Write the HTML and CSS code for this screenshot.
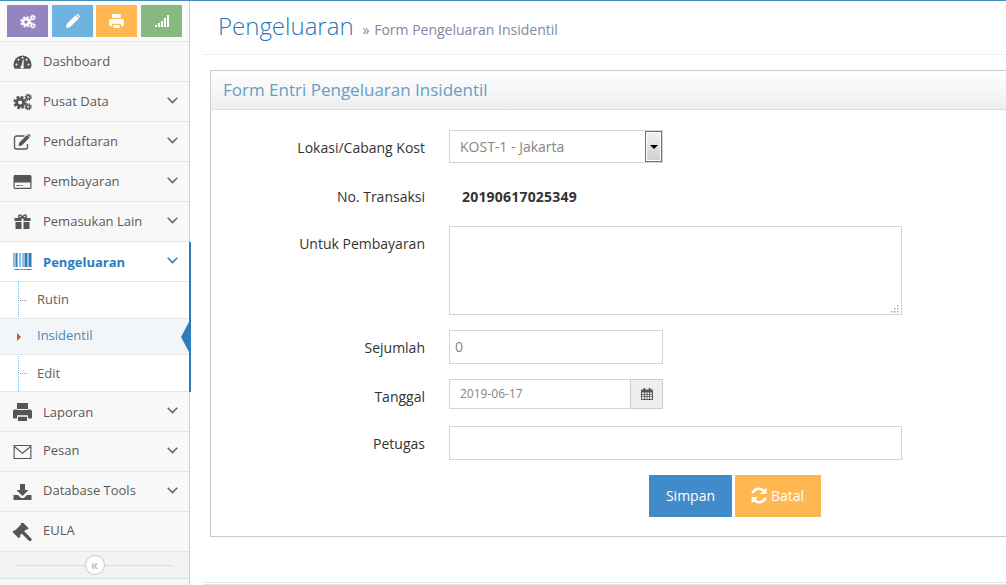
FILE: index.html
```html
<!DOCTYPE html>
<html lang="id">
<head>
<meta charset="utf-8">
<title>Form Pengeluaran Insidentil</title>
<link rel="stylesheet" href="styles.css">
</head>
<body>
<svg class="sprite" aria-hidden="true">
  <symbol id="i-cogs" viewBox="0 0 20 18">
    <circle cx="7.500" cy="9.500" r="3.700" fill="none" stroke="currentColor" stroke-width="3"/>
    <circle cx="7.500" cy="9.500" r="6" fill="none" stroke="currentColor" stroke-width="2.200" stroke-dasharray="2.900 1.810"/>
    <circle cx="16" cy="4" r="1.900" fill="none" stroke="currentColor" stroke-width="1.700"/>
    <circle cx="16" cy="4" r="3.200" fill="none" stroke="currentColor" stroke-width="1.200" stroke-dasharray="1.500 1"/>
    <circle cx="16" cy="14" r="1.900" fill="none" stroke="currentColor" stroke-width="1.700"/>
    <circle cx="16" cy="14" r="3.200" fill="none" stroke="currentColor" stroke-width="1.200" stroke-dasharray="1.500 1"/>
  </symbol>
  <symbol id="i-pencil" viewBox="0 0 14 14">
    <path fill="currentColor" d="M0 14l.8-4L9.600 1.200 12.800 4.400 4 13.200zM10.400.4c.5-.5 1.300-.5 1.800 0l1.400 1.400c.5.5.5 1.300 0 1.800l-.2.2L10.200.6z"/>
  </symbol>
  <symbol id="i-print" viewBox="0 0 19 18">
    <path fill="currentColor" d="M4 0h11v6H4zM2 6.500h15c1.100 0 2 .9 2 2v6c0 .5-.4 1-1 1h-3v-3H4v3H1c-.6 0-1-.5-1-1v-6c0-1.100.9-2 2-2zM5 13.500h9V18H5z"/>
    <path fill="none" stroke="#f8f8f8" stroke-width="1" d="M4 6.500h11M4 13h11"/>
  </symbol>
  <symbol id="i-print-w" viewBox="0 0 19 18">
    <path fill="currentColor" d="M4 0h11v5H4zM2 6.500h15c1.100 0 2 .9 2 2v6c0 .5-.4 1-1 1h-3v-3H4v3H1c-.6 0-1-.5-1-1v-6c0-1.100.9-2 2-2zM5.500 14h8v4h-8z"/>
  </symbol>
  <symbol id="i-chev" viewBox="0 0 11 7">
    <path fill="none" stroke="currentColor" stroke-width="1.500" d="M.7.800l4.800 4.800L10.300.800"/>
  </symbol>
</svg>

<div class="page">
  <aside class="sidebar">
    <div class="shortcuts">
      <a class="sc sc-purple"><svg class="sc-icon sc-cogs"><use href="#i-cogs"/></svg></a>
      <a class="sc sc-blue"><svg class="sc-icon sc-pen"><use href="#i-pencil"/></svg></a>
      <a class="sc sc-orange"><svg class="sc-icon sc-prn"><use href="#i-print-w"/></svg></a>
      <a class="sc sc-green">
        <svg class="sc-icon sc-sig" viewBox="0 0 14 12"><path fill="currentColor" d="M0 10h2v2H0zM3 8h2v4H3zM6 6h2v6H6zM9 3h2v9H9zM12 0h2v12h-2z"/></svg>
      </a>
    </div>
    <ul class="menu">
      <li class="item">
        <svg class="ic" viewBox="0 0 18 18"><path fill="currentColor" d="M0 11.500a9 9 0 0 1 18 0c0 1.600-.3 2.800-.8 3.800-.2.300-.5.500-.9.500H1.700c-.4 0-.7-.2-.9-.5C.3 14.300 0 13.100 0 11.500z"/><g fill="#f8f8f8"><circle cx="3" cy="11.500" r="1"/><circle cx="5" cy="6.800" r="1"/><circle cx="9" cy="4.800" r="1"/><circle cx="13" cy="6.800" r="1"/><circle cx="15" cy="11.500" r="1"/><path d="M8 12.500l1.500-6 .8.200L10 13a1.700 1.700 0 1 1-2-.5z"/></g></svg>
        <span class="lbl">Dashboard</span>
      </li>
      <li class="item">
        <svg class="ic"><use href="#i-cogs"/></svg><span class="lbl">Pusat Data</span><svg class="chev"><use href="#i-chev"/></svg>
      </li>
      <li class="item">
        <svg class="ic" viewBox="0 0 18 18"><path fill="none" stroke="currentColor" stroke-width="1.300" d="M11 3H3C1.900 3 1 3.900 1 5v9c0 1.100.9 2 2 2h9c1.100 0 2-.9 2-2v-3"/><path fill="currentColor" d="M5 13l.7-3.300L13.500 2l2.600 2.600-7.800 7.800zM14.300 1.200c.4-.4 1-.4 1.400 0l1.100 1.100c.4.400.4 1 0 1.400l-.2.200-2.500-2.500z"/></svg>
        <span class="lbl">Pendaftaran</span><svg class="chev"><use href="#i-chev"/></svg>
      </li>
      <li class="item">
        <svg class="ic" viewBox="0 0 18 18"><path fill="currentColor" fill-rule="evenodd" d="M1.500 2h15C17.300 2 18 2.700 18 3.500v11c0 .8-.7 1.500-1.500 1.500h-15C.7 16 0 15.300 0 14.500v-11C0 2.700.7 2 1.500 2zM1.200 9.500v5c0 .2.100.3.300.3h15c.2 0 .3-.1.300-.3v-5z"/><path fill="currentColor" d="M3 12h3v1H3zM7 12h2v1H7z"/></svg>
        <span class="lbl">Pembayaran</span><svg class="chev"><use href="#i-chev"/></svg>
      </li>
      <li class="item">
        <svg class="ic" viewBox="0 0 18 18"><path fill="currentColor" d="M1 5h7v3H1zM10 5h7v3h-7zM2 9h6v7H3c-.6 0-1-.4-1-1zM10 9h6v6c0 .6-.4 1-1 1h-5z"/><path fill="none" stroke="currentColor" stroke-width="1.400" d="M9 5C7 5 5 4.500 5 3.200 5 2 6.800 1.600 7.600 2.500 8.300 3.300 9 5 9 5zM9 5c2 0 4-.5 4-1.800C13 2 11.200 1.600 10.400 2.500 9.700 3.300 9 5 9 5z"/></svg>
        <span class="lbl">Pemasukan Lain</span><svg class="chev"><use href="#i-chev"/></svg>
      </li>
      <li class="group">
        <div class="item item-open">
          <svg class="ic" viewBox="0 0 18 18"><path fill="currentColor" d="M0 0h1v14H0zM2 0h2v14H2zM6 0h1v14H6zM9 0h1v14H9zM11 0h3v14h-3zM15 0h3v14h-3zM1 16h5v1H1zM7 16h2v1H7zM10 16h2v1h-2zM13 16h5v1h-5z"/></svg>
          <span class="lbl">Pengeluaran</span><svg class="chev"><use href="#i-chev"/></svg>
        </div>
        <ul class="sub">
          <li class="sub-item sub-first"><span class="tick"></span>Rutin</li>
          <li class="sub-item sub-active"><span class="mark"></span>Insidentil<span class="notch"></span></li>
          <li class="sub-item"><span class="tick"></span>Edit</li>
        </ul>
      </li>
      <li class="item item-down">
        <svg class="ic"><use href="#i-print"/></svg><span class="lbl">Laporan</span><svg class="chev"><use href="#i-chev"/></svg>
      </li>
      <li class="item item-up">
        <svg class="ic" viewBox="0 0 18 18"><path fill="none" stroke="currentColor" stroke-width="1.100" d="M.6 2.500h16.800v13H.6zM.8 3.500l8.200 6.700L17.200 3.500"/></svg>
        <span class="lbl">Pesan</span><svg class="chev"><use href="#i-chev"/></svg>
      </li>
      <li class="item item-up">
        <svg class="ic" viewBox="0 0 18 18"><path fill="currentColor" d="M6.500 1h5v6H15l-6 6-6-6h3.500zM0 12h4.500L7 14.500c1.100 1 2.900 1 4 0l2.500-2.500H18v5H0zM13 14.500h1.200v1H13zM15 14.500h1.200v1H15z"/></svg>
        <span class="lbl">Database Tools</span><svg class="chev"><use href="#i-chev"/></svg>
      </li>
      <li class="item item-up">
        <svg class="ic" viewBox="0 0 18 18"><g fill="currentColor" transform="rotate(-45 7 7)"><rect x="2" y="3.500" width="10" height="7"/><rect x="0" y="2.500" width="2.500" height="9"/><rect x="11.500" y="2.500" width="2.500" height="9"/></g><path fill="none" stroke="currentColor" stroke-width="3.200" stroke-linecap="round" d="M8.500 8.500l8 8"/></svg>
        <span class="lbl">EULA</span>
      </li>
    </ul>
    <div class="collapse"><button class="collapse-btn" type="button">«</button></div>
  </aside>

  <main class="main">
    <header class="page-head">
      <h1>Pengeluaran</h1>
      <small><span class="raquo">»</span> Form Pengeluaran Insidentil</small>
    </header>

    <section class="box">
      <h4 class="box-title">Form Entri Pengeluaran Insidentil</h4>
      <form class="box-body">
        <div class="row row-select">
          <label>Lokasi/Cabang Kost</label>
          <div class="select-wrap">
            <select class="control select"><option>KOST-1 - Jakarta</option></select>
            <span class="select-btn"><span class="select-arrow"></span></span>
          </div>
        </div>
        <div class="row row-trx">
          <label>No. Transaksi</label>
          <strong class="trx">20190617025349</strong>
        </div>
        <div class="row row-area">
          <label>Untuk Pembayaran</label>
          <div class="area-wrap">
            <textarea class="control area"></textarea>
            <svg class="grip" viewBox="0 0 8 8"><path fill="#aaa" d="M6 0h1.500v1.500H6zM3 3h1.500v1.500H3zM6 3h1.500v1.500H6zM0 6h1.500v1.500H0zM3 6h1.500v1.500H3zM6 6h1.500v1.500H6z"/></svg>
          </div>
        </div>
        <div class="row row-amount">
          <label>Sejumlah</label>
          <input class="control short" type="text" value="0">
        </div>
        <div class="row row-date">
          <label>Tanggal</label>
          <div class="date-group">
            <input class="control date" type="text" value="2019-06-17">
            <span class="addon">
              <svg class="cal" viewBox="0 0 12 12"><path fill="#555" fill-rule="evenodd" d="M1 1.500h1.500V0h1.800v1.500h3.400V0h1.800v1.500H11c.6 0 1 .4 1 1V11c0 .6-.4 1-1 1H1c-.6 0-1-.4-1-1V2.500c0-.6.4-1 1-1zM1 4.500v1.500h2.200V4.500zM4 4.500v1.500h1.600V4.500zM6.400 4.500v1.500H8V4.500zM8.800 4.500v1.500H11V4.500zM1 6.800v1.500h2.200V6.800zM4 6.800v1.500h1.600V6.800zM6.400 6.800v1.500H8V6.800zM8.800 6.800v1.500H11V6.800zM1 9.100V11h2.200V9.100zM4 9.100V11h1.600V9.100zM6.400 9.100V11H8V9.100zM8.800 9.100V11H11V9.100z"/></svg>
            </span>
          </div>
        </div>
        <div class="row row-officer">
          <label>Petugas</label>
          <input class="control wide" type="text">
        </div>
        <div class="actions">
          <button class="btn btn-save" type="button">Simpan</button>
          <button class="btn btn-cancel" type="button">
            <svg class="refresh" viewBox="0 0 16 16"><path fill="#fff" d="M15 .5v6H9l2.200-2.200A4.900 4.900 0 0 0 3.200 6.200H.6A7.500 7.500 0 0 1 13 2.500zM1 15.500v-6h6l-2.200 2.200a4.900 4.900 0 0 0 8-1.900h2.600A7.500 7.500 0 0 1 3 13.500z"/></svg>Batal
          </button>
        </div>
      </form>
    </section>

    <div class="foot-line"></div>
  </main>
</div>
</body>
</html>
```

FILE: styles.css
```css
* { box-sizing: border-box; }
html, body { margin: 0; padding: 0; height: 100%; overflow: hidden; background: #fff; }
body { font-family: "Open Sans", "Liberation Sans", sans-serif; font-size: 13px; color: #393939; }
ul { list-style: none; margin: 0; padding: 0; }
.sprite { width: 0; height: 0; position: absolute; }

.page { display: flex; width: 1006px; height: 585px; border-top: 1px solid #438eb9; overflow: hidden; }

/* Sidebar */
.sidebar { width: 190px; flex: none; background: #f8f8f8; border-right: 1px solid #ccc; display: flex; flex-direction: column; }
.shortcuts { height: 41px; display: flex; gap: 4px; padding: 4px 0 0 7px; background: #fafafa; border-bottom: 1px solid #e5e5e5; }
.sc { width: 41px; height: 32px; display: flex; align-items: center; justify-content: center; color: #fff; }
.sc-purple { background: #9585bf; }
.sc-blue { background: #6fb3e0; margin-right: -1px; }
.sc-orange { background: #ffb752; }
.sc-green { background: #87b87f; }
.sc-icon { display: block; }
.sc-cogs { width: 16px; height: 15px; }
.sc-pen { width: 14px; height: 14px; }
.sc-prn { width: 15px; height: 14px; }
.sc-sig { width: 14px; height: 12px; }

.item { height: 40px; display: flex; align-items: center; padding-left: 13px; color: #585858; border-bottom: 1px solid #e5e5e5; background: #f8f8f8; }
.ic { width: 19px; height: 18px; flex: none; color: #555; }
.lbl { margin-left: 11px; flex: 1; padding-bottom: 1px; }
.chev { width: 11px; height: 7px; margin-right: 11px; margin-bottom: 2px; color: #666; }
.item-up .lbl { padding-bottom: 3px; }
.item-down .lbl { padding-bottom: 0; padding-top: 1px; }
.item-open { background: #fff; color: #2b7dbc; font-weight: 700; }
.item-open .ic, .item-open .chev { color: #2b7dbc; }
.item-open .lbl { padding-bottom: 0; padding-top: 1px; }

.group { position: relative; background: #fff; }
.group::after { content: ""; position: absolute; top: 0; bottom: 0; right: -2px; width: 2px; background: #2b7dbc; }
.sub { position: relative; border-bottom: 1px solid #e5e5e5; }
.sub::before { content: ""; position: absolute; left: 18px; top: 0; bottom: 0; border-left: 1px dotted #7fb0d6; }
.sub-item { position: relative; height: 36px; display: flex; align-items: center; padding-left: 37px; color: #616161; }
.sub-first { padding-bottom: 2px; }
.sub-active { height: 37px; background: #f3f6f9; color: #4b88b7; border-top: 1px dotted #ddd; border-bottom: 1px dotted #ddd; padding-bottom: 3px; }
.tick { position: absolute; left: 20px; top: 50%; width: 7px; border-top: 1px dotted #999; }
.mark { position: absolute; left: 17px; top: 50%; margin-top: -4px; border-left: 4px solid #c4563a; border-top: 4px solid transparent; border-bottom: 4px solid transparent; }
.notch { position: absolute; right: 0; top: 50%; margin-top: -15px; border-right: 8px solid #2b7dbc; border-top: 15px solid transparent; border-bottom: 15px solid transparent; z-index: 1; }

.collapse { height: 27px; background: #f3f3f3; border-bottom: 1px solid #e0e0e0; display: flex; align-items: center; justify-content: center; position: relative; }
.collapse::before { content: ""; position: absolute; left: 16px; right: 16px; top: 13px; border-top: 1px solid #ddd; }
.collapse-btn { position: relative; width: 20px; height: 20px; padding: 0; border: 1px solid #c8c8c8; border-radius: 50%; background: #fff; color: #aaa; font: 14px/16px "Open Sans", sans-serif; }

/* Main */
.main { flex: 1; min-width: 0; padding-left: 13px; }
.page-head { height: 54px; border-bottom: 1px dotted #e2e2e2; padding: 9px 0 0 15px; display: flex; align-items: baseline; gap: 9px; }
.page-head h1 { margin: 0; font-size: 24px; font-weight: 300; line-height: 32px; color: #2679b5; }
.page-head small { font-size: 14px; color: #8089a0; }
.raquo { color: #8089a0; margin-right: 1px; }

.box { margin: 15px 0 0 7px; height: 467px; border: 1px solid #ccc; border-right: 0; }
.box-title { margin: 0; height: 39px; padding-left: 12px; font-size: 17px; font-weight: 400; line-height: 37px; color: #669fc7; background: linear-gradient(#fff, #eee); border-bottom: 1px solid #ddd; }
.box-body { padding-top: 20px; }

.row { display: flex; align-items: flex-start; margin-bottom: 15px; }
.row label { width: 214px; flex: none; margin-right: 24px; padding-top: 8px; text-align: right; font-size: 14px; line-height: 20px; color: #333; }
.control { display: block; margin: 0; border: 1px solid #d5d5d5; background: #fff; color: #858585; font-family: "Open Sans", sans-serif; font-size: 14px; padding: 0 10px; border-radius: 0; outline: 0; }
.row-select { margin-bottom: 16px; }
.select-wrap { position: relative; width: 214px; height: 33px; }
.select { width: 100%; height: 100%; appearance: none; -webkit-appearance: none; padding-bottom: 1px; }
.select-btn { position: absolute; right: 1px; top: 1px; bottom: 1px; width: 17px; border: 1px solid #707070; outline: 1px solid #fff; outline-offset: -2px; background: linear-gradient(#f2f2f2, #d0d0d0); display: flex; align-items: center; justify-content: center; }
.select-arrow { border-top: 4px solid #000; border-left: 4px solid transparent; border-right: 4px solid transparent; }
.row-trx { height: 32px; }
.trx { font-size: 14px; line-height: 20px; padding: 8px 0 0 13px; color: #333; letter-spacing: .2px; }
.area-wrap { position: relative; width: 453px; height: 89px; }
.area { width: 100%; height: 100%; resize: none; }
.grip { position: absolute; right: 3px; bottom: 2px; width: 8px; height: 8px; }
.short { width: 214px; height: 34px; padding: 0 5px 2px; }
.date-group { display: flex; width: 214px; height: 30px; }
.date { flex: 1; min-width: 0; height: 30px; font-size: 12px; padding-bottom: 2px; }
.addon { width: 33px; flex: none; background: #eee; border: 1px solid #ccc; margin-left: -1px; display: flex; align-items: center; justify-content: center; }
.cal { width: 12px; height: 12px; }
.row-date { margin-bottom: 17px; }
.wide { width: 453px; height: 34px; }
.actions { display: flex; gap: 3px; padding-left: 438px; }
.btn { height: 42px; border: 0; padding: 0 0 2px; color: #fff; font-family: "Open Sans", sans-serif; font-size: 14px; display: flex; align-items: center; justify-content: center; }
.btn-save { width: 83px; background: #428bca; }
.btn-cancel { width: 86px; background: #ffb752; }
.refresh { width: 18px; height: 17px; margin-right: 3px; margin-left: -2px; }

.foot-line { margin-top: 45px; height: 3px; border-top: 1px solid #e5e5e5; border-bottom: 1px solid #e5e5e5; }
```
